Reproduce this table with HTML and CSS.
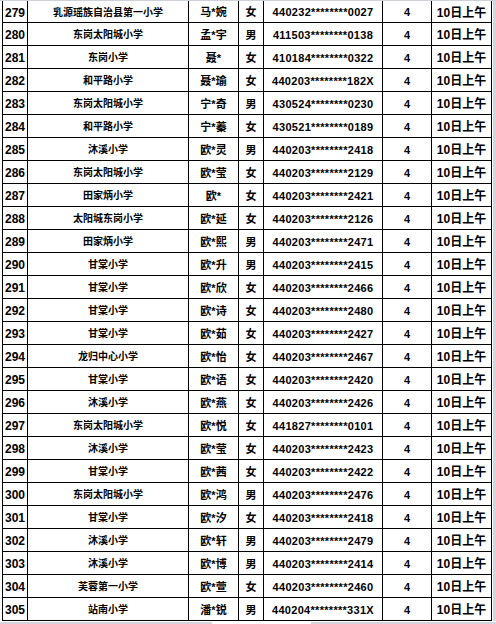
FILE: index.html
```html
<!DOCTYPE html>
<html lang="zh">
<head>
<meta charset="utf-8">
<link rel="stylesheet" href="styles.css">
</head>
<body>
<div class="sheet">
  <div class="topline"></div>
  <div class="mid">
    <div class="grid" role="table">
      <div class="c no">279</div><div class="c sc">乳源瑶族自治县第一小学</div><div class="c nm">马*婉</div><div class="c sx">女</div><div class="c id">440232********0027</div><div class="c n">4</div><div class="c t">10日上午</div>
      <div class="c no">280</div><div class="c sc">东岗太阳城小学</div><div class="c nm">孟*宇</div><div class="c sx">男</div><div class="c id">411503********0138</div><div class="c n">4</div><div class="c t">10日上午</div>
      <div class="c no">281</div><div class="c sc">东岗小学</div><div class="c nm">聂*</div><div class="c sx">女</div><div class="c id">410184********0322</div><div class="c n">4</div><div class="c t">10日上午</div>
      <div class="c no">282</div><div class="c sc">和平路小学</div><div class="c nm">聂*瑜</div><div class="c sx">女</div><div class="c id">440203********182X</div><div class="c n">4</div><div class="c t">10日上午</div>
      <div class="c no">283</div><div class="c sc">东岗太阳城小学</div><div class="c nm">宁*奇</div><div class="c sx">男</div><div class="c id">430524********0230</div><div class="c n">4</div><div class="c t">10日上午</div>
      <div class="c no">284</div><div class="c sc">和平路小学</div><div class="c nm">宁*蓁</div><div class="c sx">女</div><div class="c id">430521********0189</div><div class="c n">4</div><div class="c t">10日上午</div>
      <div class="c no">285</div><div class="c sc">沐溪小学</div><div class="c nm">欧*灵</div><div class="c sx">男</div><div class="c id">440203********2418</div><div class="c n">4</div><div class="c t">10日上午</div>
      <div class="c no">286</div><div class="c sc">东岗太阳城小学</div><div class="c nm">欧*莹</div><div class="c sx">女</div><div class="c id">440203********2129</div><div class="c n">4</div><div class="c t">10日上午</div>
      <div class="c no">287</div><div class="c sc">田家炳小学</div><div class="c nm">欧*</div><div class="c sx">女</div><div class="c id">440203********2421</div><div class="c n">4</div><div class="c t">10日上午</div>
      <div class="c no">288</div><div class="c sc">太阳城东岗小学</div><div class="c nm">欧*延</div><div class="c sx">女</div><div class="c id">440203********2126</div><div class="c n">4</div><div class="c t">10日上午</div>
      <div class="c no">289</div><div class="c sc">田家炳小学</div><div class="c nm">欧*熙</div><div class="c sx">男</div><div class="c id">440203********2471</div><div class="c n">4</div><div class="c t">10日上午</div>
      <div class="c no">290</div><div class="c sc">甘棠小学</div><div class="c nm">欧*升</div><div class="c sx">男</div><div class="c id">440203********2415</div><div class="c n">4</div><div class="c t">10日上午</div>
      <div class="c no">291</div><div class="c sc">甘棠小学</div><div class="c nm">欧*欣</div><div class="c sx">女</div><div class="c id">440203********2466</div><div class="c n">4</div><div class="c t">10日上午</div>
      <div class="c no">292</div><div class="c sc">甘棠小学</div><div class="c nm">欧*诗</div><div class="c sx">女</div><div class="c id">440203********2480</div><div class="c n">4</div><div class="c t">10日上午</div>
      <div class="c no">293</div><div class="c sc">甘棠小学</div><div class="c nm">欧*茹</div><div class="c sx">女</div><div class="c id">440203********2427</div><div class="c n">4</div><div class="c t">10日上午</div>
      <div class="c no">294</div><div class="c sc">龙归中心小学</div><div class="c nm">欧*怡</div><div class="c sx">女</div><div class="c id">440203********2467</div><div class="c n">4</div><div class="c t">10日上午</div>
      <div class="c no">295</div><div class="c sc">甘棠小学</div><div class="c nm">欧*语</div><div class="c sx">女</div><div class="c id">440203********2420</div><div class="c n">4</div><div class="c t">10日上午</div>
      <div class="c no">296</div><div class="c sc">沐溪小学</div><div class="c nm">欧*燕</div><div class="c sx">女</div><div class="c id">440203********2426</div><div class="c n">4</div><div class="c t">10日上午</div>
      <div class="c no">297</div><div class="c sc">东岗太阳城小学</div><div class="c nm">欧*悦</div><div class="c sx">女</div><div class="c id">441827********0101</div><div class="c n">4</div><div class="c t">10日上午</div>
      <div class="c no">298</div><div class="c sc">沐溪小学</div><div class="c nm">欧*莹</div><div class="c sx">女</div><div class="c id">440203********2423</div><div class="c n">4</div><div class="c t">10日上午</div>
      <div class="c no">299</div><div class="c sc">甘棠小学</div><div class="c nm">欧*茜</div><div class="c sx">女</div><div class="c id">440203********2422</div><div class="c n">4</div><div class="c t">10日上午</div>
      <div class="c no">300</div><div class="c sc">东岗太阳城小学</div><div class="c nm">欧*鸿</div><div class="c sx">男</div><div class="c id">440203********2476</div><div class="c n">4</div><div class="c t">10日上午</div>
      <div class="c no">301</div><div class="c sc">甘棠小学</div><div class="c nm">欧*汐</div><div class="c sx">女</div><div class="c id">440203********2418</div><div class="c n">4</div><div class="c t">10日上午</div>
      <div class="c no">302</div><div class="c sc">沐溪小学</div><div class="c nm">欧*轩</div><div class="c sx">男</div><div class="c id">440203********2479</div><div class="c n">4</div><div class="c t">10日上午</div>
      <div class="c no">303</div><div class="c sc">沐溪小学</div><div class="c nm">欧*博</div><div class="c sx">男</div><div class="c id">440203********2414</div><div class="c n">4</div><div class="c t">10日上午</div>
      <div class="c no">304</div><div class="c sc">芙蓉第一小学</div><div class="c nm">欧*萱</div><div class="c sx">女</div><div class="c id">440203********2460</div><div class="c n">4</div><div class="c t">10日上午</div>
      <div class="c no">305</div><div class="c sc">站南小学</div><div class="c nm">潘*锐</div><div class="c sx">男</div><div class="c id">440204********331X</div><div class="c n">4</div><div class="c t">10日上午</div>
    </div>
    <div class="rightedge"></div>
  </div>
  <div class="bottom"><span class="seg a"></span><span class="gap"></span><span class="seg b"></span></div>
</div>
</body>
</html>
```
FILE: styles.css
```css
html, body { margin: 0; padding: 0; background: #fff; }
body {
  font-family: "Liberation Sans", "Noto Sans CJK SC", sans-serif;
  color: #000;
  font-weight: 700;
}
.sheet {
  width: 496px;
  height: 624px;
  overflow: hidden;
  display: flex;
  flex-direction: column;
}
.topline { height: 1px; background: #cdd2da; flex: none; }
.mid { display: flex; flex: none; }
.grid {
  margin-left: 2px;
  display: grid;
  grid-template-columns: 25px 161px 50px 25px 119px 49px 60px;
  grid-template-rows: 22px repeat(26, 23px);
  border-left: 1px solid #000;
}
.c {
  box-sizing: border-box;
  border-right: 1px solid #000;
  border-bottom: 1px solid #000;
  display: flex;
  align-items: center;
  justify-content: center;
  padding-top: 2px;
  white-space: nowrap;
  overflow: hidden;
  line-height: 1;
}
.no { justify-content: flex-start; padding-left: 2px; font-size: 12px; }
.sc { font-size: 10px; }
.nm { font-size: 11px; }
.sx { font-size: 11px; }
.id { font-size: 11px; letter-spacing: 0.3px; }
.n { font-size: 11px; }
.t { font-size: 12px; }
.rightedge { width: 3px; margin-left: 1px; background: #d3d6dc; }
.bottom { display: flex; height: 2px; margin-top: 1px; flex: none; }
.seg { background: #d3d6dc; }
.a { width: 212px; }
.gap { width: 99px; }
.b { flex: 1; }
```
